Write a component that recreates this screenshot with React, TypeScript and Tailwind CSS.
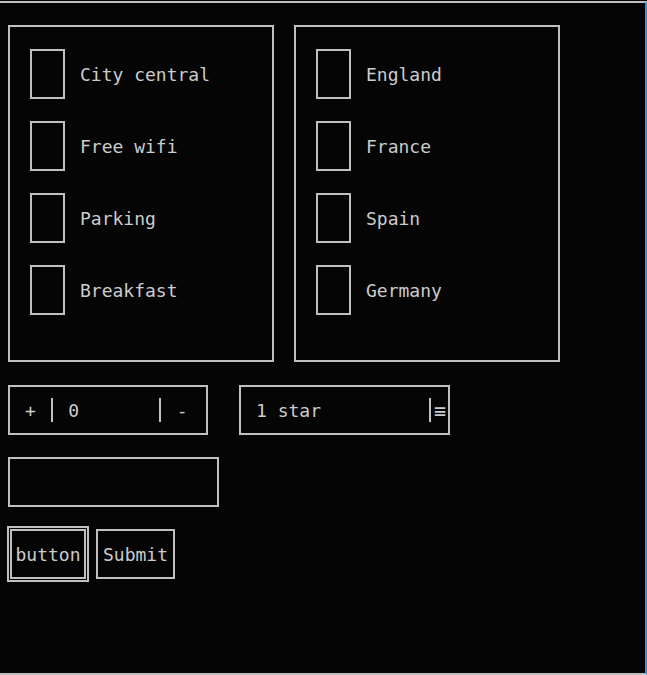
import React from "react";

const font = { fontFamily: '"DejaVu Sans Mono", "Liberation Mono", monospace' };

function Row({ label }: { label: string }) {
  return (
    <div className="flex items-center h-[50px]">
      <div className="w-[35px] h-[50px] border-2 border-[#c0c0c0] shrink-0" />
      <span className="ml-[15px] pt-[2px] text-[18px] leading-none text-[#cccccc] whitespace-pre">{label}</span>
    </div>
  );
}

function Panel({ items }: { items: string[] }) {
  return (
    <div className="w-[266px] h-[337px] border-2 border-[#c0c0c0] pt-[22px] pl-[20px] flex flex-col gap-[22px]">
      {items.map((l) => (
        <Row key={l} label={l} />
      ))}
    </div>
  );
}

function Bar() {
  return (
    <span className="inline-flex w-[1ch] justify-center items-center">
      <span className="block w-[2px] h-[24px] bg-[#c0c0c0]" />
    </span>
  );
}

export default function App() {
  return (
    <div className="w-[647px] h-[675px] bg-[#050505] pt-px" style={font}>
      <div className="h-[674px] border-t-2 border-b-2 border-r-2 border-t-[#c0c0c0] border-b-[#c0c0c0] border-r-[#3a8fd8] pl-2 pt-[22px] text-[#cccccc] text-[18px]">
        <div className="flex gap-[20px]">
          <Panel items={["City central", "Free wifi", "Parking", "Breakfast"]} />
          <Panel items={["England", "France", "Spain", "Germany"]} />
        </div>

        <div className="flex gap-[31px] mt-[23px]">
          <div className="w-[200px] h-[50px] border-2 border-[#c0c0c0] flex items-center pl-[15px] leading-none whitespace-pre">
            <span className="pt-[2px]">+ </span>
            <Bar />
            <span className="pt-[2px]"> 0       </span>
            <Bar />
            <span className="pt-[2px]"> -</span>
          </div>
          <div className="w-[211px] h-[50px] border-2 border-[#c0c0c0] flex items-center justify-between pl-[15px] pr-[2px] leading-none whitespace-pre">
            <span className="pt-[2px]">1 star</span>
            <span className="flex items-center">
              <span className="block w-[2px] h-[24px] bg-[#c0c0c0] mr-[3px]" />
              <span className="text-[20px] pt-[2px]">≡</span>
            </span>
          </div>
        </div>

        <div className="w-[211px] h-[50px] border-2 border-[#c0c0c0] mt-[22px]" />

        <div className="flex gap-[10px] mt-[22px] ml-[2px]">
          <button className="w-[76px] h-[50px] border-2 border-[#c0c0c0] outline-2 outline-solid outline-[#c0c0c0] outline-offset-1 text-[18px] leading-none text-[#cccccc] flex items-center justify-center pt-[2px]">
            button
          </button>
          <button className="w-[79px] h-[50px] border-2 border-[#c0c0c0] text-[18px] leading-none text-[#cccccc] flex items-center justify-center pt-[2px]">
            Submit
          </button>
        </div>
      </div>
    </div>
  );
}
